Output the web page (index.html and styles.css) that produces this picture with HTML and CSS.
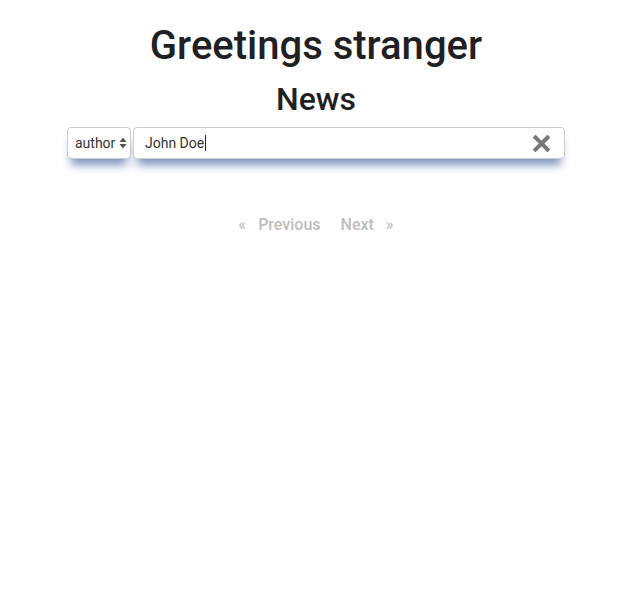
FILE: index.html
```html
<!DOCTYPE html>
<html>
<head>
<meta charset="utf-8">
<link rel="stylesheet" href="styles.css">
</head>
<body>
<div class="page">
  <h1 class="title">Greetings stranger</h1>
  <h2 class="subtitle">News</h2>
  <div class="search">
    <div class="select">
      <span class="select-text">author</span>
      <svg class="select-arrows" width="8" height="12" viewBox="0 0 8 12"><path d="M4 0.5 L7.5 5 L0.5 5 Z M4 11.5 L7.5 7 L0.5 7 Z" fill="#555"/></svg>
    </div>
    <div class="field">
      <span class="field-text">John Doe</span><span class="caret"></span>
      <svg class="clear" width="17" height="17" viewBox="0 0 17 17"><path d="M2.5 2.5 L14.5 14.5 M14.5 2.5 L2.5 14.5" stroke="#777" stroke-width="4" stroke-linecap="square"/></svg>
    </div>
  </div>
  <nav class="pager">
    <span class="pager-item">«</span>
    <span class="pager-item">Previous</span>
    <span class="pager-item next">Next</span>
    <span class="pager-item">»</span>
  </nav>
</div>
</body>
</html>
```

FILE: styles.css
```css
* { box-sizing: border-box; }
html, body { margin: 0; padding: 0; background: #fff; }
body { font-family: Roboto, "Liberation Sans", sans-serif; color: #1f1f24; }
.page {
  width: 632px;
  display: flex;
  flex-direction: column;
  align-items: center;
}
.title {
  margin: 24px 0 0;
  font-size: 40px;
  font-weight: 500;
  line-height: 44px;
}
.subtitle {
  margin: 13px 0 0;
  font-size: 32px;
  font-weight: 500;
  line-height: 36px;
}
.search {
  margin-top: 10px;
  width: 498px;
  display: flex;
  gap: 2px;
  height: 32px;
}
.select, .field {
  height: 32px;
  border: 1px solid #cdcdcd;
  border-radius: 4px;
  background: #fff;
  box-shadow: 0 10px 10px -4px rgba(70, 100, 165, 0.7);
  display: flex;
  align-items: center;
  font-size: 14px;
  color: #333;
}
.select {
  width: 64px;
  padding: 0 0 0 7px;
}
.select-text { flex: 1; }
.select-arrows { margin-right: 3px; }
.field {
  flex: 1;
  padding: 0 14px 0 11px;
}
.caret {
  width: 1px;
  height: 16px;
  background: #222;
  margin-left: 1px;
}
.clear { margin-left: auto; }
.pager {
  margin-top: 56px;
  display: flex;
  font-size: 16px;
  color: #bdbdbd;
  font-weight: 500;
}
.pager-item { padding: 0 6px; }
.next { margin-left: 8px; }
```
